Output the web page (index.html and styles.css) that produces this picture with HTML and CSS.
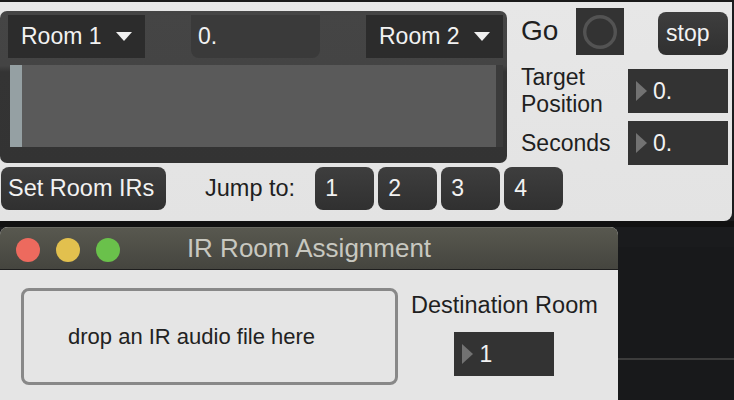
FILE: index.html
```html
<!DOCTYPE html>
<html lang="en">
<head>
    <meta charset="UTF-8">
    <meta name="viewport" content="width=device-width, initial-scale=1.0">
    <title>IR Room Player</title>
    <link rel="stylesheet" href="styles.css">
</head>
<body>

    <!-- patcher window -->
    <div class="top-line"></div>
    <div class="patcher">

        <div class="left-col">
            <!-- room player -->
            <div class="player">
                <div class="player-bar">
                    <div class="menu">Room 1 <span class="arrow"></span></div>
                    <div class="flonum">0.</div>
                    <div class="menu">Room 2 <span class="arrow"></span></div>
                </div>
                <div class="wave">
                    <div class="wave-fill"></div>
                </div>
            </div>

            <!-- bottom buttons -->
            <div class="button-row">
                <div class="btn set-btn">Set Room IRs</div>
                <div class="jump-label">Jump to:</div>
                <div class="jump-buttons">
                    <div class="btn jump-btn">1</div>
                    <div class="btn jump-btn">2</div>
                    <div class="btn jump-btn">3</div>
                    <div class="btn jump-btn">4</div>
                </div>
            </div>
        </div>

        <div class="right-col">
            <div class="go-row">
                <div class="go-label">Go</div>
                <div class="go-button">
                    <svg width="48" height="47" viewBox="0 0 48 47">
                        <circle cx="24" cy="24" r="15.3" fill="none" stroke="#535353" stroke-width="3.4"/>
                    </svg>
                </div>
                <div class="btn stop-btn">stop</div>
            </div>
            <div class="param-row">
                <div class="param-label two-line">Target<br>Position</div>
                <div class="numbox"><span class="tri"></span>0.</div>
            </div>
            <div class="param-row seconds-row">
                <div class="param-label">Seconds</div>
                <div class="numbox"><span class="tri"></span>0.</div>
            </div>
        </div>

    </div>

    <!-- desktop with the IR assignment window -->
    <div class="desk">
        <div class="window">
            <div class="title-bar">
                <div class="lights">
                    <span class="light red"></span>
                    <span class="light yellow"></span>
                    <span class="light green"></span>
                </div>
                <div class="title">IR Room Assignment</div>
            </div>
            <div class="window-body">
                <div class="drop-zone">drop an IR audio file here</div>
                <div class="destination">
                    <div class="dest-label">Destination Room</div>
                    <div class="numbox"><span class="tri"></span>1</div>
                </div>
            </div>
        </div>
        <div class="desk-side"></div>
    </div>

</body>
</html>
```

FILE: styles.css
```css
/* page */
body {
    margin: 0;
    width: 734px;
    height: 400px;
    overflow: hidden;
    background-color: #1b1c1e;
    font-family: 'Liberation Sans', Arial, sans-serif;
    color: #1f1f1f;
    white-space: nowrap;
}

.top-line {
    height: 2px;
    background-color: #1a1a1a;
}

/* patcher window */
.patcher {
    height: 219px;
    margin-right: 2px;
    display: flex;
    background: linear-gradient(#e7e7e7, #e3e3e3);
    border-bottom-right-radius: 8px;
}

.left-col {
    width: 507px;
    flex: none;
}

.player {
    margin-top: 9px;
    height: 152px;
    box-sizing: border-box;
    padding: 4px 4px 0 8px;
    border-radius: 7px;
    background: linear-gradient(#454545 0, #444 36%, #343434 40%, #333 100%);
}

.player-bar {
    display: flex;
    justify-content: space-between;
}

.menu {
    width: 137px;
    height: 43px;
    box-sizing: border-box;
    padding-left: 13px;
    display: flex;
    align-items: center;
    background-color: #2c2c2c;
    color: #f2f2f2;
    font-size: 23px;
}

.arrow {
    margin-left: 14px;
    border-left: 8px solid transparent;
    border-right: 8px solid transparent;
    border-top: 9px solid #f0f0f0;
}

.flonum {
    width: 129px;
    height: 43px;
    box-sizing: border-box;
    padding-left: 7px;
    display: flex;
    align-items: center;
    background-color: #3a3a3a;
    border-radius: 0 0 8px 8px;
    color: #f2f2f2;
    font-size: 23px;
}

.wave {
    margin: 7px 0 0 2px;
    height: 82px;
    display: flex;
    padding-right: 7px;
    background-color: #3b3b3b;
}

.wave-fill {
    flex: 1;
    background-color: #5a5a5a;
    border-left: 12px solid #95a0a3;
}

/* buttons */
.btn {
    height: 43px;
    box-sizing: border-box;
    flex: none;
    display: flex;
    align-items: center;
    border-radius: 8px;
    background: linear-gradient(#3e3e3e, #303030);
    color: #f2f2f2;
    font-size: 23px;
}

.button-row {
    margin-top: 4px;
    display: flex;
    align-items: center;
}

.set-btn {
    width: 165px;
    margin-left: 1px;
    padding-left: 7px;
    font-size: 23.5px;
}

.jump-label {
    flex: none;
    margin-left: 39px;
    font-size: 23.5px;
}

.jump-buttons {
    flex: none;
    margin-left: 20px;
    display: flex;
    gap: 4px;
}

.jump-btn {
    width: 59px;
    padding-left: 10px;
}

/* right column */
.right-col {
    flex: 1;
    padding: 5px 4px 0 14px;
}

.go-row {
    display: flex;
    align-items: center;
    height: 48px;
}

.go-label {
    font-size: 28px;
}

.go-button {
    width: 48px;
    height: 47px;
    margin-left: 18px;
    background-color: #333;
}

.go-button svg {
    display: block;
}

.stop-btn {
    margin-left: auto;
    margin-top: 4px;
    width: 70px;
    padding-left: 8px;
}

.param-row {
    margin-top: 14px;
    display: flex;
    align-items: center;
}

.seconds-row {
    margin-top: 8px;
}

.param-label {
    font-size: 23px;
    line-height: 27px;
}

.two-line {
    margin: -5px 0 -5px;
}

.numbox {
    width: 100px;
    height: 44px;
    margin-left: auto;
    box-sizing: border-box;
    padding-left: 8px;
    display: flex;
    align-items: center;
    background-color: #333;
    color: #f2f2f2;
    font-size: 23px;
}

.tri {
    margin-right: 6px;
    border-top: 10px solid transparent;
    border-bottom: 10px solid transparent;
    border-left: 11px solid #727272;
}

/* desktop */
.desk {
    height: 179px;
    display: flex;
    background: linear-gradient(#111 0 6px, #1a1b1d 6px);
}

.desk-side {
    flex: 1;
    margin-top: 26px;
    background: linear-gradient(#18191b 0 111px, #3c3c3c 111px 113px, #18191b 113px);
}

.window {
    width: 618px;
    margin-top: 6px;
    border-radius: 8px 8px 0 0;
    overflow: hidden;
    background-color: #e5e5e5;
}

.title-bar {
    height: 43px;
    position: relative;
    display: flex;
    align-items: center;
    justify-content: center;
    background: linear-gradient(#58584f, #45453f);
    border-bottom: 1px solid #1e1e1e;
    border-top: 1px solid #6a6a62;
    box-sizing: border-box;
}

.lights {
    position: absolute;
    left: 16px;
    top: 10px;
    display: flex;
    gap: 16px;
}

.light {
    width: 24px;
    height: 24px;
    border-radius: 50%;
}

.red {
    background-color: #ed6a5e;
}

.yellow {
    background-color: #e2c04e;
}

.green {
    background-color: #6ac14b;
}

.title {
    color: #c8c8c0;
    font-size: 26px;
}

.window-body {
    padding: 18px 0 0 21px;
    display: flex;
}

.drop-zone {
    width: 377px;
    height: 97px;
    box-sizing: border-box;
    padding-left: 44px;
    display: flex;
    align-items: center;
    border: 3px solid #888;
    border-radius: 8px;
    font-size: 22px;
    color: #222;
}

.destination {
    margin-left: 13px;
    display: flex;
    flex-direction: column;
    align-items: center;
}

.dest-label {
    font-size: 23.5px;
    margin-top: 4px;
}

.destination .numbox {
    margin: 13px 0 0 0;
}
```
